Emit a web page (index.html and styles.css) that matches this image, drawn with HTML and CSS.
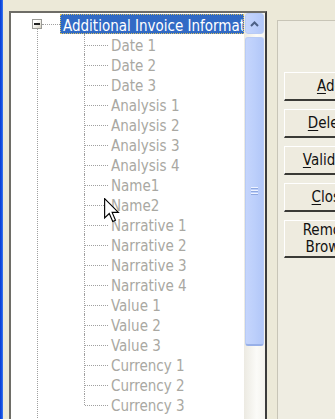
FILE: index.html
```html
<!DOCTYPE html>
<html lang="en">
<head>
    <meta charset="UTF-8">
    <title>Invoice Fields</title>
    <link rel="stylesheet" href="styles.css">
</head>
<body>
    <div class="window">
        <div class="window-edge"></div>

        <div class="tree-box">
            <div class="tree">
                <ul class="tree-root">
                    <li class="node">
                        <div class="node-row">
                            <span class="toggle"></span>
                            <span class="branch"></span>
                            <span class="node-label selected">Additional Invoice Information</span>
                        </div>
                        <ul class="children">
                            <li>Date 1</li>
                            <li>Date 2</li>
                            <li>Date 3</li>
                            <li>Analysis 1</li>
                            <li>Analysis 2</li>
                            <li>Analysis 3</li>
                            <li>Analysis 4</li>
                            <li>Name1</li>
                            <li>Name2</li>
                            <li>Narrative 1</li>
                            <li>Narrative 2</li>
                            <li>Narrative 3</li>
                            <li>Narrative 4</li>
                            <li>Value 1</li>
                            <li>Value 2</li>
                            <li>Value 3</li>
                            <li>Currency 1</li>
                            <li>Currency 2</li>
                            <li>Currency 3</li>
                        </ul>
                    </li>
                </ul>

                <!-- mouse pointer over the list -->
                <svg class="cursor" width="16" height="25" viewBox="0 0 12.8 20">
                    <path d="M0.5 0.5 L0.5 16 L4.2 12.4 L7 18.8 L9.2 17.8 L6.5 11.5 L11.5 11.5 Z" fill="#fff" stroke="#000" stroke-width="0.9" stroke-linejoin="miter"/>
                </svg>
            </div>

            <div class="scrollbar">
                <div class="scroll-btn">
                    <svg width="9" height="6" viewBox="0 0 9 6">
                        <path d="M1 5 L4.5 1.5 L8 5" fill="none" stroke="#4d6185" stroke-width="2"/>
                    </svg>
                </div>
                <div class="scroll-thumb">
                    <span class="grip"></span>
                </div>
            </div>
        </div>

        <div class="side-panel">
            <button><u>A</u>dd</button>
            <button><u>D</u>elete</button>
            <button><u>V</u>alidate</button>
            <button><u>C</u>lose</button>
            <button class="tall">Remove<br>Browse</button>
        </div>
    </div>
</body>
</html>
```

FILE: styles.css
```css
body {
    margin: 0;
    overflow: hidden;
    background-color: #ece9d8; /* XP dialog beige */
    font-family: "DejaVu Sans Condensed", "DejaVu Sans", sans-serif;
    font-size: 15px;
}
ul {
    list-style: none;
    margin: 0;
    padding: 0;
}
.window {
    display: flex;
    align-items: flex-start;
    height: 419px;
}
.window > * {
    flex-shrink: 0;
}
.window-edge {
    width: 3px;
    align-self: stretch;
    background: linear-gradient(to right, #0a3cd0, #1a5ae8 70%, #4f86f0);
}

/* tree view */
.tree-box {
    display: flex;
    width: 258px;
    height: 420px;
    margin: 11px 0 0 6px;
    box-sizing: border-box;
    border: 2px solid;
    border-color: #6e6d67 #3c3c3c #3c3c3c #6e6d67;
}
.tree {
    position: relative;
    flex: 1;
    min-width: 0;
    padding-top: 1px;
    background: white;
    overflow: hidden;
}
.tree-root > li {
    position: relative;
}
.tree-root > li::before {
    content: "";
    position: absolute;
    left: 26px;
    top: 15px;
    bottom: -40px;
    border-left: 1px dotted #a0a0a0;
}
.node-row {
    display: flex;
    align-items: center;
    height: 20px;
}
.toggle {
    position: relative;
    width: 10px;
    height: 10px;
    margin-left: 21px;
    box-sizing: border-box;
    border: 1px solid #9a9a96;
    background: linear-gradient(135deg, #fff 30%, #d6d2c2);
    z-index: 1;
}
.toggle::after {
    content: "";
    position: absolute;
    left: 1px;
    top: 3px;
    width: 6px;
    height: 2px;
    background: #222;
}
.branch {
    width: 18px;
    border-top: 1px dotted #a0a0a0;
}
.node-label {
    white-space: nowrap;
}
.selected {
    flex: 1;
    height: 20px;
    box-sizing: border-box;
    padding: 0 3px 0 2px;
    border: 1px dotted #d8c060;
    background-color: #316ac5;
    color: white;
    line-height: 22px;
    overflow: hidden;
}
.children {
    margin-left: 73px;
}
.children li {
    position: relative;
    height: 20px;
    padding-left: 27px;
    line-height: 24px;
    color: #a9a8a2;
    white-space: nowrap;
}
.children li::before {
    content: "";
    position: absolute;
    left: 0;
    top: 0;
    bottom: 0;
    border-left: 1px dotted #a0a0a0;
}
.children li:last-child::before {
    bottom: 9px;
}
.children li::after {
    content: "";
    position: absolute;
    left: 1px;
    top: 11px;
    width: 23px;
    border-top: 1px dotted #a0a0a0;
}
.cursor {
    position: absolute;
    left: 93px;
    top: 185px;
}

/* scroll bar */
.scrollbar {
    width: 21px;
    background: linear-gradient(to right, #eceae2, #fbfbf8 60%, #f4f3ee);
}
.scroll-btn, .scroll-thumb {
    width: 19px;
    margin-left: 1px;
    box-sizing: border-box;
    border: 1px solid #b8cbf5;
    border-radius: 3px;
    background: linear-gradient(to right, #c5d5fc, #bccffb 50%, #b2c7f8);
}
.scroll-btn {
    display: flex;
    align-items: center;
    justify-content: center;
    height: 21px;
}
.scroll-thumb {
    display: flex;
    align-items: center;
    justify-content: center;
    height: 309px;
    margin-top: 3px;
    border-bottom: 2px solid #98b0e8;
}
.grip {
    width: 7px;
    height: 9px;
    background: repeating-linear-gradient(to bottom, #eef3ff 0 1px, #8fa8e0 1px 2px, transparent 2px 3px);
}

/* buttons */
.side-panel {
    display: flex;
    flex-direction: column;
    gap: 8px;
    width: 120px;
    height: 420px;
    margin: 20px 0 0 10px;
    padding: 51px 0 0 6px;
    box-sizing: border-box;
    border-left: 1px solid #c8c5b7;
    border-top: 1px solid #c8c5b7;
    background-color: #efede2;
}
button {
    width: 92px;
    height: 29px;
    padding: 0;
    font-family: inherit;
    font-size: 15px;
    color: #111;
    background: #eeebdf;
    border: 1px solid;
    border-color: #fff #5a5a55 #3a3a36 #fff;
    border-bottom-width: 2px;
    line-height: 17px;
}
button u {
    text-underline-offset: 2px;
}
button.tall {
    height: 38px;
}
```
